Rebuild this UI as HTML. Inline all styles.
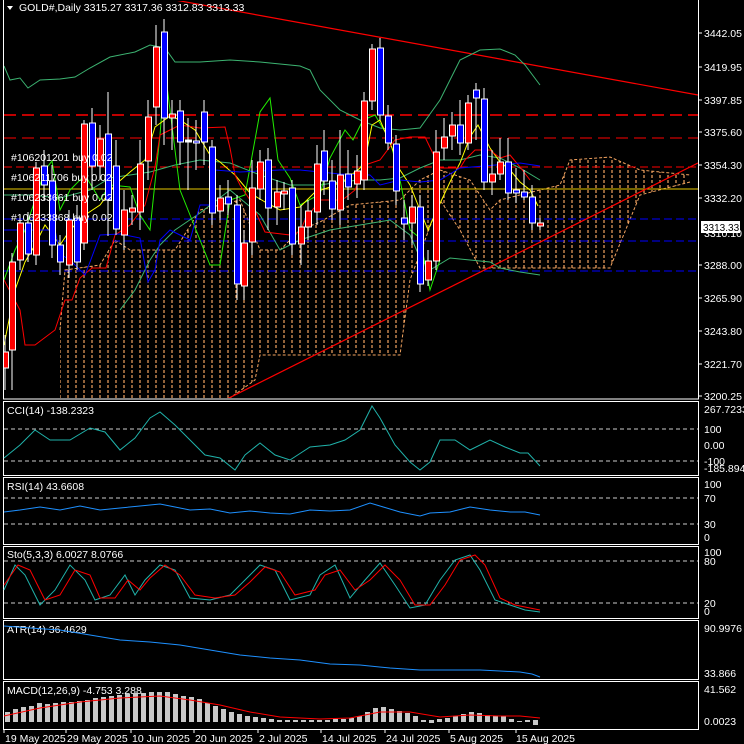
<!DOCTYPE html>
<html><head><meta charset="utf-8"><style>
html,body{margin:0;padding:0;background:#000;}
svg{display:block;}
text{font-family:"Liberation Sans",sans-serif;font-size:10.5px;fill:#fff;}
</style></head><body>
<svg width="744" height="744" viewBox="0 0 744 744" xmlns="http://www.w3.org/2000/svg">
<defs>
<pattern id="cl" x="0" y="0" width="8" height="5" patternUnits="userSpaceOnUse"><line x1="4" y1="0" x2="4" y2="3" stroke="#f4a460" stroke-width="1.2"/></pattern>
<clipPath id="mc"><rect x="4" y="1" width="694" height="397"/></clipPath>
</defs>
<rect width="744" height="744" fill="#000"/>
<g clip-path="url(#mc)">
<polygon fill="url(#cl)" points="60,330 65,270 100,265 115,240 130,250 175,250 200,210 240,200 260,250 280,250 300,230 320,222 350,205 400,200 420,180 440,170 470,180 490,210 500,200 560,185 570,160 610,157 640,170 690,175 690,182 640,195 610,268 480,268 460,230 440,200 410,280 400,355 260,355 255,380 230,398 60,398"/>
<polyline fill="none" stroke="#f4a460" stroke-dasharray="3,2" points="60,330 65,270 100,265 115,240 130,250 175,250 200,210 240,200 260,250 280,250 300,230 320,222 350,205 400,200 420,180 440,170 470,180 490,210 500,200 560,185 570,160 610,157 640,170 690,175"/>
<polyline fill="none" stroke="#f4a460" stroke-dasharray="3,2" points="690,182 640,195 610,268 480,268 460,230 440,200 410,280 400,355 260,355 255,380 230,398"/>
<line x1="4" y1="115" x2="698" y2="115" stroke="#f00" stroke-width="1.5" stroke-dasharray="12,6"/>
<line x1="4" y1="138" x2="698" y2="138" stroke="#f00" stroke-dasharray="12,6"/>
<line x1="4" y1="167" x2="698" y2="167" stroke="#f00" stroke-dasharray="8,4"/>
<line x1="4" y1="189" x2="698" y2="189" stroke="#e8c800"/>
<line x1="4" y1="219" x2="698" y2="219" stroke="#0000ff" stroke-dasharray="8,4"/>
<line x1="4" y1="241" x2="698" y2="241" stroke="#0000ff" stroke-dasharray="8,4"/>
<line x1="4" y1="271" x2="698" y2="271" stroke="#0000ff" stroke-dasharray="8,4"/>
<line x1="175" y1="0" x2="698" y2="95" stroke="#f00" stroke-width="1.2"/>
<line x1="225" y1="400" x2="698" y2="163" stroke="#f00" stroke-width="1.2"/>
<polyline fill="none" stroke="#3cb371" points="4,66 10,80 20,78 28,88 40,80 60,79 75,77 90,68 110,57 135,52 150,45 165,48 175,62 200,62 230,60 260,62 300,66 310,70 320,90 340,110 360,120 380,128 400,130 420,128 440,100 460,60 480,50 500,49 515,55 525,65 540,85"/>
<polyline fill="none" stroke="#3cb371" points="4,195 30,195 60,198 90,190 110,178 130,175 150,172 175,165 200,160 230,163 260,175 290,185 320,185 340,182 360,180 380,180 400,178 420,168 440,160 460,160 480,155 500,158 520,168 540,180"/>
<polyline fill="none" stroke="#3cb371" points="120,310 135,290 150,260 160,245 175,230 200,213 230,190 260,215 280,250 300,240 330,230 360,225 390,220 410,235 420,258 430,270 450,258 470,260 490,262 500,268 520,272 540,275"/>
<polyline fill="none" stroke="#22ee00" points="4,280 15,250 25,230 35,200 45,170 52,161 60,210 70,190 85,175 100,200 110,185 130,187 140,215 150,230 160,135 165,70 170,110 180,190 190,215 200,240 210,265 220,265 230,200 245,195 260,112 270,98 278,160 290,178 300,205 320,194 330,158 345,130 353,140 363,120 375,115 390,140 400,180 410,230 420,238 430,290 440,260"/>
<polyline fill="none" stroke="#ffff00" points="4,345 15,290 25,262 35,245 45,225 60,245 70,230 85,215 100,205 115,185 130,172 145,160 155,127 170,116 180,120 195,130 210,155 220,162 235,175 250,193 265,202 280,210 300,207 315,192 330,187 345,180 360,168 365,160 372,125 380,120 392,148 400,170 410,185 420,210 428,230 436,212 450,182 460,163 470,137 478,125 490,148 500,162 510,170 520,182 530,190 538,206"/>
<polyline fill="none" stroke="#f00" points="4,280 20,310 25,345 35,345 55,330 65,300 72,300 80,278 92,268 106,268 115,235 130,225 145,205 155,167 160,135 170,130 180,125 200,128 225,127 230,148 235,175 240,185 250,200 265,232 290,235 300,232 305,220 320,200 340,200 345,198 355,190 365,165 380,160 395,140 410,137 425,137 440,168 460,168 465,160 475,150 490,150 500,158 510,155 520,167 530,180"/>
<polyline fill="none" stroke="#0000ff" points="4,230 30,230 45,230 55,230 60,254 70,260 85,275 90,262 100,235 120,234 140,238 148,282 155,270 160,240 170,230 180,235 190,240 200,205 210,205 215,170 240,172 280,170 300,170 340,174 370,175 380,185 400,180 420,182 440,180 460,168 520,163 540,166"/>
<g stroke="#fff" stroke-width="1">
<line x1="5" y1="335" x2="5" y2="390"/><rect x="2.5" y="352" width="6" height="16" fill="#f00"/>
<line x1="12" y1="253" x2="12" y2="390"/><rect x="9.5" y="262" width="6" height="88" fill="#f00"/>
<line x1="20" y1="215" x2="20" y2="270"/><rect x="17.5" y="223" width="6" height="37" fill="#f00"/>
<line x1="28" y1="212" x2="28" y2="262"/><rect x="25.5" y="223" width="6" height="31" fill="#00f"/>
<line x1="36" y1="162" x2="36" y2="265"/><rect x="33.5" y="168" width="6" height="87" fill="#f00"/>
<line x1="44" y1="150" x2="44" y2="200"/><rect x="41.5" y="166" width="6" height="19" fill="#00f"/>
<line x1="52" y1="165" x2="52" y2="258"/><rect x="49.5" y="181" width="6" height="64" fill="#00f"/>
<line x1="60" y1="235" x2="60" y2="275"/><rect x="57.5" y="245" width="6" height="17" fill="#00f"/>
<line x1="69" y1="210" x2="69" y2="278"/><rect x="66.5" y="220" width="6" height="45" fill="#f00"/>
<line x1="77" y1="205" x2="77" y2="270"/><rect x="74.5" y="218" width="6" height="44" fill="#00f"/>
<line x1="84" y1="120" x2="84" y2="250"/><rect x="81.5" y="124" width="6" height="119" fill="#f00"/>
<line x1="92" y1="108" x2="92" y2="190"/><rect x="89.5" y="123" width="6" height="43" fill="#00f"/>
<line x1="100" y1="125" x2="100" y2="180"/><rect x="97.5" y="139" width="6" height="27" fill="#f00"/>
<line x1="108" y1="92" x2="108" y2="236"/><rect x="105.5" y="134" width="6" height="66" fill="#00f"/>
<line x1="116" y1="140" x2="116" y2="235"/><rect x="113.5" y="166" width="6" height="63" fill="#00f"/>
<line x1="124" y1="190" x2="124" y2="250"/><rect x="121.5" y="210" width="6" height="25" fill="#f00"/>
<line x1="132" y1="195" x2="132" y2="225"/><rect x="129.5" y="208" width="6" height="4" fill="#f00"/>
<line x1="140" y1="140" x2="140" y2="230"/><rect x="137.5" y="164" width="6" height="48" fill="#f00"/>
<line x1="148" y1="100" x2="148" y2="180"/><rect x="145.5" y="117" width="6" height="44" fill="#f00"/>
<line x1="156" y1="25" x2="156" y2="125"/><rect x="153.5" y="47" width="6" height="60" fill="#f00"/>
<line x1="164" y1="19" x2="164" y2="145"/><rect x="161.5" y="32" width="6" height="86" fill="#00f"/>
<line x1="172" y1="100" x2="172" y2="150"/><rect x="169.5" y="114" width="6" height="4" fill="#f00"/>
<line x1="180" y1="100" x2="180" y2="165"/><rect x="177.5" y="111" width="6" height="31" fill="#00f"/>
<line x1="188" y1="118" x2="188" y2="190"/><rect x="185.5" y="140" width="6" height="2" fill="#fff"/>
<line x1="196" y1="120" x2="196" y2="170"/><rect x="193.5" y="141" width="6" height="2" fill="#00f"/>
<line x1="204" y1="100" x2="204" y2="165"/><rect x="201.5" y="112" width="6" height="30" fill="#00f"/>
<line x1="212" y1="140" x2="212" y2="225"/><rect x="209.5" y="147" width="6" height="66" fill="#00f"/>
<line x1="220" y1="185" x2="220" y2="220"/><rect x="217.5" y="198" width="6" height="13" fill="#f00"/>
<line x1="228" y1="180" x2="228" y2="215"/><rect x="225.5" y="197" width="6" height="7" fill="#00f"/>
<line x1="237" y1="195" x2="237" y2="300"/><rect x="234.5" y="205" width="6" height="79" fill="#00f"/>
<line x1="244" y1="230" x2="244" y2="300"/><rect x="241.5" y="243" width="6" height="43" fill="#f00"/>
<line x1="252" y1="160" x2="252" y2="255"/><rect x="249.5" y="188" width="6" height="54" fill="#f00"/>
<line x1="260" y1="150" x2="260" y2="200"/><rect x="257.5" y="162" width="6" height="27" fill="#f00"/>
<line x1="268" y1="148" x2="268" y2="230"/><rect x="265.5" y="160" width="6" height="48" fill="#00f"/>
<line x1="277" y1="180" x2="277" y2="225"/><rect x="274.5" y="192" width="6" height="15" fill="#f00"/>
<line x1="284" y1="182" x2="284" y2="210"/><rect x="281.5" y="191" width="6" height="3" fill="#f00"/>
<line x1="292" y1="180" x2="292" y2="255"/><rect x="289.5" y="188" width="6" height="56" fill="#00f"/>
<line x1="301" y1="205" x2="301" y2="265"/><rect x="298.5" y="227" width="6" height="17" fill="#f00"/>
<line x1="308" y1="200" x2="308" y2="240"/><rect x="305.5" y="211" width="6" height="16" fill="#f00"/>
<line x1="317" y1="145" x2="317" y2="225"/><rect x="314.5" y="164" width="6" height="48" fill="#f00"/>
<line x1="324" y1="130" x2="324" y2="195"/><rect x="321.5" y="151" width="6" height="30" fill="#00f"/>
<line x1="332" y1="160" x2="332" y2="220"/><rect x="329.5" y="181" width="6" height="28" fill="#00f"/>
<line x1="340" y1="130" x2="340" y2="225"/><rect x="337.5" y="175" width="6" height="35" fill="#f00"/>
<line x1="348" y1="150" x2="348" y2="200"/><rect x="345.5" y="174" width="6" height="13" fill="#00f"/>
<line x1="357" y1="155" x2="357" y2="198"/><rect x="354.5" y="171" width="6" height="13" fill="#f00"/>
<line x1="364" y1="92" x2="364" y2="190"/><rect x="361.5" y="101" width="6" height="79" fill="#f00"/>
<line x1="372" y1="44" x2="372" y2="110"/><rect x="369.5" y="49" width="6" height="52" fill="#f00"/>
<line x1="380" y1="38" x2="380" y2="120"/><rect x="377.5" y="48" width="6" height="67" fill="#00f"/>
<line x1="388" y1="105" x2="388" y2="150"/><rect x="385.5" y="116" width="6" height="27" fill="#00f"/>
<line x1="396" y1="135" x2="396" y2="205"/><rect x="393.5" y="144" width="6" height="47" fill="#00f"/>
<line x1="404" y1="200" x2="404" y2="240"/><rect x="401.5" y="218" width="6" height="6" fill="#00f"/>
<line x1="412" y1="195" x2="412" y2="245"/><rect x="409.5" y="207" width="6" height="16" fill="#f00"/>
<line x1="420" y1="195" x2="420" y2="292"/><rect x="417.5" y="207" width="6" height="77" fill="#00f"/>
<line x1="428" y1="250" x2="428" y2="286"/><rect x="425.5" y="261" width="6" height="19" fill="#f00"/>
<line x1="436" y1="130" x2="436" y2="270"/><rect x="433.5" y="152" width="6" height="109" fill="#f00"/>
<line x1="444" y1="118" x2="444" y2="160"/><rect x="441.5" y="137" width="6" height="11" fill="#f00"/>
<line x1="452" y1="112" x2="452" y2="150"/><rect x="449.5" y="125" width="6" height="11" fill="#f00"/>
<line x1="460" y1="100" x2="460" y2="155"/><rect x="457.5" y="125" width="6" height="18" fill="#00f"/>
<line x1="468" y1="95" x2="468" y2="150"/><rect x="465.5" y="103" width="6" height="40" fill="#f00"/>
<line x1="476" y1="83" x2="476" y2="140"/><rect x="473.5" y="90" width="6" height="8" fill="#00f"/>
<line x1="484" y1="88" x2="484" y2="190"/><rect x="481.5" y="99" width="6" height="83" fill="#00f"/>
<line x1="492" y1="150" x2="492" y2="195"/><rect x="489.5" y="174" width="6" height="8" fill="#f00"/>
<line x1="500" y1="138" x2="500" y2="180"/><rect x="497.5" y="162" width="6" height="12" fill="#f00"/>
<line x1="508" y1="138" x2="508" y2="200"/><rect x="505.5" y="162" width="6" height="31" fill="#00f"/>
<line x1="516" y1="168" x2="516" y2="203"/><rect x="513.5" y="190" width="6" height="3" fill="#00f"/>
<line x1="524" y1="170" x2="524" y2="200"/><rect x="521.5" y="192" width="6" height="5" fill="#00f"/>
<line x1="532" y1="185" x2="532" y2="230"/><rect x="529.5" y="197" width="6" height="26" fill="#00f"/>
<line x1="540" y1="218" x2="540" y2="230"/><rect x="537.5" y="223" width="6" height="3" fill="#f00"/>
</g>
<text x="11" y="161" fill="#ddd">#106201201 buy 0.02</text>
<text x="11" y="181" fill="#ddd">#106211706 buy 0.02</text>
<text x="11" y="201" fill="#ddd">#106233661 buy 0.02</text>
<text x="11" y="221" fill="#ddd">#106233868 buy 0.02</text>
</g>
<polygon points="7,6 13,6 10,10" fill="#fff"/>
<text x="19" y="11">GOLD#,Daily  3315.27 3317.36 3312.83 3313.33</text>
<g fill="none" stroke="#fff" stroke-width="1">
<rect x="3.5" y="-1" width="695" height="400"/>
<rect x="3.5" y="401.5" width="695" height="74"/>
<rect x="3.5" y="477.5" width="695" height="67"/>
<rect x="3.5" y="546.5" width="695" height="72"/>
<rect x="3.5" y="620.5" width="695" height="59"/>
<rect x="3.5" y="681.5" width="695" height="48"/>
</g>
<g stroke="#fff"><line x1="698" y1="33" x2="702" y2="33"/><line x1="698" y1="67" x2="702" y2="67"/><line x1="698" y1="100" x2="702" y2="100"/><line x1="698" y1="132" x2="702" y2="132"/><line x1="698" y1="165" x2="702" y2="165"/><line x1="698" y1="198" x2="702" y2="198"/><line x1="698" y1="265" x2="702" y2="265"/><line x1="698" y1="298" x2="702" y2="298"/><line x1="698" y1="331" x2="702" y2="331"/><line x1="698" y1="364" x2="702" y2="364"/><line x1="698" y1="396" x2="702" y2="396"/></g>
<text x="704" y="37">3442.05</text>
<text x="704" y="71">3419.95</text>
<text x="704" y="104">3397.85</text>
<text x="704" y="136">3375.60</text>
<text x="704" y="169">3354.30</text>
<text x="704" y="202">3332.20</text>
<text x="704" y="237">3310.10</text>
<rect x="701" y="221" width="39" height="12" fill="#fff"/>
<text x="703" y="231" style="fill:#000;font-size:10px">3313.33</text>
<text x="704" y="269">3288.00</text>
<text x="704" y="302">3265.90</text>
<text x="704" y="335">3243.80</text>
<text x="704" y="368">3221.70</text>
<text x="704" y="400">3200.25</text>
<text x="7" y="414">CCI(14) -138.2323</text>
<line x1="4" y1="429" x2="698" y2="429" stroke="#ccc" stroke-dasharray="4,3"/>
<line x1="4" y1="461" x2="698" y2="461" stroke="#ccc" stroke-dasharray="4,3"/>
<polyline fill="none" stroke="#20b2aa" points="4,458 20,445 35,430 50,440 70,440 90,428 105,432 120,450 135,438 150,418 160,412 175,425 190,440 205,455 220,458 235,470 245,455 260,443 275,455 290,460 310,447 330,445 345,440 360,430 372,406 380,418 395,445 410,462 420,470 430,462 440,440 455,440 470,450 490,440 505,447 520,453 528,453 540,466"/>
<text x="704" y="413">267.7233</text>
<text x="704" y="433">100</text>
<text x="704" y="449">0.00</text>
<text x="704" y="465">-100</text>
<text x="704" y="472">-185.8945</text>
<text x="7" y="490">RSI(14) 43.6608</text>
<line x1="4" y1="498" x2="698" y2="498" stroke="#ccc" stroke-dasharray="4,3"/>
<line x1="4" y1="524" x2="698" y2="524" stroke="#ccc" stroke-dasharray="4,3"/>
<polyline fill="none" stroke="#1e90ff" points="4,512 20,510 40,507 60,510 80,506 100,510 120,508 140,506 160,504 175,507 190,510 210,509 230,513 250,511 270,513 290,514 310,510 330,511 350,510 370,503 380,506 400,512 420,516 430,513 450,512 470,507 490,510 510,512 525,512 540,515"/>
<text x="704" y="488">100</text>
<text x="704" y="502">70</text>
<text x="704" y="528">30</text>
<text x="704" y="541">0</text>
<text x="7" y="558">Sto(5,3,3) 6.0027 8.0766</text>
<line x1="4" y1="561" x2="698" y2="561" stroke="#ccc" stroke-dasharray="4,3"/>
<line x1="4" y1="603" x2="698" y2="603" stroke="#ccc" stroke-dasharray="4,3"/>
<polyline fill="none" stroke="#20b2aa" points="4,590 15,565 25,575 40,605 55,590 70,565 85,580 95,600 110,595 125,575 135,595 145,580 160,565 175,570 190,598 210,600 230,595 245,580 260,565 275,570 290,600 310,595 320,575 335,565 350,598 365,580 380,563 395,585 410,608 425,605 440,580 455,560 470,555 480,570 495,600 510,605 525,610 540,612"/>
<polyline fill="none" stroke="#f00" points="4,585 18,565 30,570 45,600 60,595 75,570 90,575 100,598 115,598 128,580 140,590 150,578 165,565 180,575 195,595 215,598 235,595 250,582 265,567 280,572 295,595 315,590 325,575 340,570 355,590 370,580 385,565 400,580 415,605 430,605 445,585 460,560 475,555 485,565 500,598 515,605 530,608 540,610"/>
<text x="704" y="556">100</text>
<text x="704" y="565">80</text>
<text x="704" y="607">20</text>
<text x="704" y="615">0</text>
<text x="7" y="633">ATR(14) 36.4629</text>
<polyline fill="none" stroke="#1e90ff" points="4,626 30,628 60,630 90,635 120,640 150,642 180,645 210,650 240,655 270,658 300,660 330,664 360,665 390,668 420,670 450,670 480,670 500,671 520,672 532,674 540,677"/>
<text x="704" y="632">90.9976</text>
<text x="704" y="677">33.866</text>
<text x="7" y="694">MACD(12,26,9) -4.753 3.288</text>
<g fill="#c8c8c8">
<rect x="5" y="712" width="5" height="10"/><rect x="13" y="709" width="5" height="13"/><rect x="21" y="707" width="5" height="15"/><rect x="29" y="706" width="5" height="16"/><rect x="37" y="703" width="5" height="19"/><rect x="45" y="704" width="5" height="18"/><rect x="53" y="703" width="5" height="19"/><rect x="61" y="702" width="5" height="20"/><rect x="69" y="702" width="5" height="20"/><rect x="77" y="701" width="5" height="21"/><rect x="85" y="700" width="5" height="22"/><rect x="93" y="698" width="5" height="24"/><rect x="101" y="697" width="5" height="25"/><rect x="109" y="696" width="5" height="26"/><rect x="117" y="695" width="5" height="27"/><rect x="125" y="694" width="5" height="28"/><rect x="133" y="693" width="5" height="29"/><rect x="141" y="693" width="5" height="29"/><rect x="149" y="692" width="5" height="30"/><rect x="157" y="692" width="5" height="30"/><rect x="165" y="692" width="5" height="30"/><rect x="173" y="694" width="5" height="28"/><rect x="181" y="696" width="5" height="26"/><rect x="189" y="697" width="5" height="25"/><rect x="197" y="699" width="5" height="23"/><rect x="205" y="703" width="5" height="19"/><rect x="213" y="706" width="5" height="16"/><rect x="221" y="709" width="5" height="13"/><rect x="229" y="712" width="5" height="10"/><rect x="237" y="714" width="5" height="8"/><rect x="245" y="716" width="5" height="6"/><rect x="253" y="717" width="5" height="5"/><rect x="261" y="718" width="5" height="4"/><rect x="269" y="719" width="5" height="3"/><rect x="277" y="720" width="5" height="2"/><rect x="285" y="720" width="5" height="2"/><rect x="293" y="720" width="5" height="2"/><rect x="301" y="720" width="5" height="2"/><rect x="309" y="720" width="5" height="2"/><rect x="317" y="720" width="5" height="2"/><rect x="325" y="720" width="5" height="2"/><rect x="333" y="719" width="5" height="3"/><rect x="341" y="719" width="5" height="3"/><rect x="349" y="718" width="5" height="4"/><rect x="357" y="716" width="5" height="6"/><rect x="365" y="712" width="5" height="10"/><rect x="373" y="708" width="5" height="14"/><rect x="381" y="707" width="5" height="15"/><rect x="389" y="709" width="5" height="13"/><rect x="397" y="711" width="5" height="11"/><rect x="405" y="713" width="5" height="9"/><rect x="413" y="716" width="5" height="6"/><rect x="421" y="720" width="5" height="2"/><rect x="429" y="720" width="5" height="3"/><rect x="437" y="719" width="5" height="3"/><rect x="445" y="718" width="5" height="4"/><rect x="453" y="716" width="5" height="6"/><rect x="461" y="714" width="5" height="8"/><rect x="469" y="712" width="5" height="10"/><rect x="477" y="713" width="5" height="9"/><rect x="485" y="715" width="5" height="7"/><rect x="493" y="716" width="5" height="6"/><rect x="501" y="716" width="5" height="6"/><rect x="509" y="719" width="5" height="3"/><rect x="517" y="721" width="5" height="1"/><rect x="525" y="720" width="5" height="2"/><rect x="533" y="720" width="5" height="5"/>
</g>
<polyline fill="none" stroke="#f00" points="4,716 40,708 80,702 120,698 160,696 190,700 220,705 250,712 280,717 320,719 350,718 380,712 410,712 440,717 470,715 500,716 520,716 540,718"/>
<text x="704" y="693">41.562</text>
<text x="704" y="725">0.0023</text>
<g stroke="#fff"><line x1="4" y1="729" x2="4" y2="733"/><line x1="66" y1="729" x2="66" y2="733"/><line x1="131" y1="729" x2="131" y2="733"/><line x1="194" y1="729" x2="194" y2="733"/><line x1="258" y1="729" x2="258" y2="733"/><line x1="321" y1="729" x2="321" y2="733"/><line x1="385" y1="729" x2="385" y2="733"/><line x1="449" y1="729" x2="449" y2="733"/><line x1="516" y1="729" x2="516" y2="733"/></g>
<text x="5" y="742">19 May 2025</text>
<text x="67" y="742">29 May 2025</text>
<text x="132" y="742">10 Jun 2025</text>
<text x="195" y="742">20 Jun 2025</text>
<text x="259" y="742">2 Jul 2025</text>
<text x="322" y="742">14 Jul 2025</text>
<text x="386" y="742">24 Jul 2025</text>
<text x="450" y="742">5 Aug 2025</text>
<text x="516" y="742">15 Aug 2025</text>
</svg>
</body></html>
